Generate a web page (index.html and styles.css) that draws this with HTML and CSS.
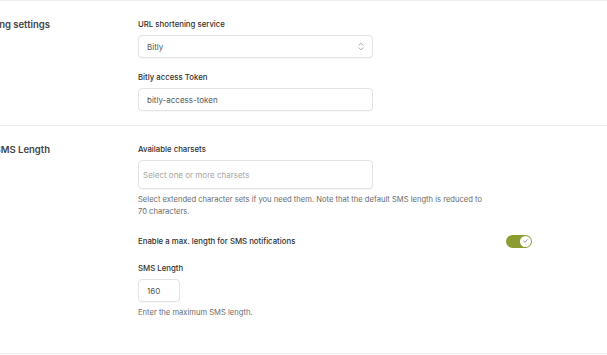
FILE: index.html
```html
<!doctype html>
<html>
<head>
  <meta charset="utf-8">
  <title>SMS settings</title>
  <link rel="stylesheet" href="styles.css">
</head>
<body>
  <div id="settings">
    <div class="section">
      <div class="section-head"><h2>Shortening settings</h2></div>
      <div class="section-body">
        <div class="field">
          <label for="shortener">URL shortening service</label>
          <div class="select">
            <span class="value">Bitly</span>
            <svg class="chevrons" width="6" height="9" viewBox="0 0 6 9"><path d="M1 3.2 3 1.2 5 3.2M1 5.8 3 7.8 5 5.8" fill="none" stroke="#9a9a9a" stroke-width="0.9" stroke-linecap="round" stroke-linejoin="round"/></svg>
          </div>
        </div>
        <div class="field">
          <label for="token">Bitly access Token</label>
          <input id="token" class="text" type="text" value="bitly-access-token">
        </div>
      </div>
    </div>
    <div class="section last">
      <div class="section-head"><h2>SMS Length</h2></div>
      <div class="section-body">
        <div class="field">
          <label>Available charsets</label>
          <div class="multi"><span class="placeholder">Select one or more charsets</span></div>
          <p class="help">Select extended character sets if you need them. Note that the default SMS length is reduced to 70 characters.</p>
        </div>
        <div class="toggle-row">
          <label>Enable a max. length for SMS notifications</label>
          <span class="toggle"><span class="knob"><svg width="5" height="4" viewBox="0 0 5 4"><path d="M0.6 2 1.9 3.2 4.4 0.7" fill="none" stroke="#777" stroke-width="0.8" stroke-linecap="round" stroke-linejoin="round"/></svg></span></span>
        </div>
        <div class="field">
          <label for="length">SMS Length</label>
          <input id="length" class="text short" type="text" value="160">
          <p class="help">Enter the maximum SMS length.</p>
        </div>
      </div>
    </div>
  </div>
</body>
</html>
```

FILE: styles.css
```css
html {
  background-color: #fff;
  color: #2c2c2c;
  font-family: Inter, "Noto Sans", sans-serif;
}

body {
  margin: 0;
  overflow: hidden;
}

#settings {
  border-top: 1px solid #ededed;
}

.section {
  display: flex;
  padding: 15px 0 14px 0;
  border-bottom: 1px solid #ececec;
}

.section.last {
  padding-bottom: 34px;
}

.section-head {
  width: 50px;
  flex-shrink: 0;
  display: flex;
  justify-content: flex-end;
}

h2 {
  margin: 0;
  flex-shrink: 0;
  white-space: nowrap;
  font-size: 9.5px;
  font-weight: 600;
  line-height: 18px;
  color: #444;
}

.section-body {
  margin-left: 88px;
  width: 394px;
}

.field {
  margin-bottom: 11px;
}

.field:last-child {
  margin-bottom: 0;
}

label {
  display: block;
  font-size: 7.8px;
  font-weight: 500;
  line-height: 16px;
  color: #2f2f2f;
  margin-bottom: 3px;
}

.select, .text, .multi {
  box-sizing: border-box;
  width: 235px;
  height: 23px;
  border: 1px solid #e3e3e3;
  border-radius: 4px;
  background: #fff;
  box-shadow: 0 1px 1px rgba(0,0,0,0.03);
  font-family: inherit;
  font-size: 8px;
  color: #555;
}

.select {
  display: flex;
  align-items: center;
  justify-content: space-between;
  padding: 0 8px;
}

.text {
  display: block;
  padding: 0 8px;
  outline: none;
}

.text.short {
  width: 42px;
}

.multi {
  height: 29px;
  display: flex;
  align-items: center;
  padding: 0 4px;
}

.placeholder {
  color: #a6a6a6;
}

.help {
  max-width: 350px;
  margin: 5px 0 0 0;
  font-size: 7.6px;
  line-height: 12px;
  color: #6b6b6b;
}

.toggle-row {
  display: flex;
  justify-content: space-between;
  align-items: center;
  margin-top: 15px;
  margin-bottom: 11px;
}

.toggle-row label {
  margin-bottom: 0;
}

.toggle {
  display: flex;
  align-items: center;
  justify-content: flex-end;
  box-sizing: border-box;
  width: 26px;
  height: 13px;
  padding: 1px;
  border-radius: 7px;
  background: #8c9b32;
}

.knob {
  display: flex;
  align-items: center;
  justify-content: center;
  width: 11px;
  height: 11px;
  border-radius: 50%;
  background: #fff;
}
```
